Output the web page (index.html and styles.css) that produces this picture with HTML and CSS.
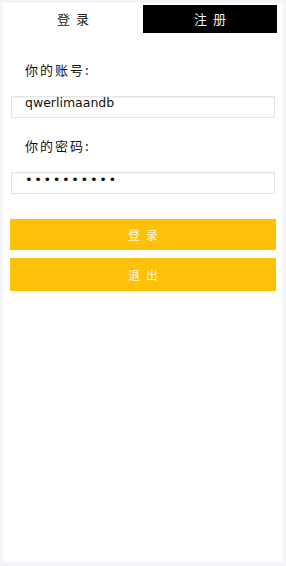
FILE: index.html
```html
<!DOCTYPE html>
<html lang="zh">
<head>
<meta charset="utf-8">
<title>登录</title>
<link rel="stylesheet" href="styles.css">
</head>
<body>
<div class="card">
  <div class="tabs">
    <div class="tab tab-active">登录</div>
    <div class="tab tab-dark">注册</div>
  </div>
  <div class="field">
    <div class="label">你的账号:</div>
    <div class="input">qwerlimaandb</div>
  </div>
  <div class="field">
    <div class="label">你的密码:</div>
    <div class="input input-pass">••••••••••</div>
  </div>
  <div class="buttons">
    <div class="btn">登录</div>
    <div class="btn btn-tall">退出</div>
  </div>
</div>
</body>
</html>
```
FILE: styles.css
```css
html, body {
  margin: 0;
  padding: 0;
}
body {
  background: #f3f4f8;
  padding: 3px;
  height: 566px;
  box-sizing: border-box;
  font-family: "Noto Sans CJK SC", "DejaVu Sans", sans-serif;
  color: #111;
}
.card {
  background: #ffffff;
  height: 559px;
}
.tabs {
  display: flex;
  padding-top: 2px;
}
.tab {
  height: 28px;
  line-height: 28px;
  text-align: center;
  font-size: 13px;
  letter-spacing: 6px;
  text-indent: 6px;
}
.tab-active {
  width: 140px;
  color: #222;
}
.tab-dark {
  width: 134px;
  background: #000;
  color: #f2f2f2;
}
.field {
  display: flex;
  flex-direction: column;
}
.label {
  margin-top: 28px;
  padding-left: 22px;
  font-size: 13px;
  line-height: 18px;
  letter-spacing: 2px;
  color: #111;
}
.field + .field .label {
  margin-top: 19px;
}
.input {
  margin-top: 17px;
  margin-left: 8px;
  width: 264px;
  height: 22px;
  box-sizing: border-box;
  border: 1px solid #e3e3e3;
  box-shadow: inset 0 1px 1px rgba(0, 0, 0, 0.04);
  padding-left: 13px;
  font-family: "DejaVu Sans", sans-serif;
  font-size: 12.5px;
  line-height: 12px;
  color: #111;
}
.input-pass {
  font-size: 13px;
  letter-spacing: 1.6px;
  line-height: 14px;
}
.buttons {
  display: flex;
  flex-direction: column;
  gap: 8px;
  margin-top: 25px;
  padding-left: 7px;
}
.btn {
  width: 266px;
  height: 31px;
  line-height: 31px;
  background: #ffc107;
  color: #fff7dc;
  text-align: center;
  font-size: 12px;
  letter-spacing: 6px;
  text-indent: 6px;
}
.btn-tall {
  height: 33px;
  line-height: 33px;
}
```
